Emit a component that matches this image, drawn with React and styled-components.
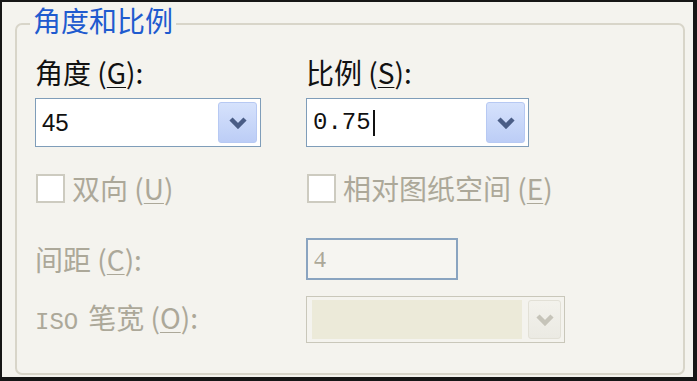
import React from "react";
import styled, { createGlobalStyle } from "styled-components";

const GlobalStyle = createGlobalStyle`
  body {
    margin: 0;
    font-family: "Noto Sans CJK SC", "Noto Sans", sans-serif;
  }
`;

const Frame = styled.div`
  width: 697px;
  height: 381px;
  box-sizing: border-box;
  border-style: solid;
  border-color: #161616;
  border-width: 2px 4px 4px 2px;
  background: #f4f3ee;
  padding: 3px 8px 2px 13px;
  display: flex;
  flex-direction: column;
`;

const Group = styled.fieldset`
  flex: 1;
  margin: 0;
  padding: 0 0 0 18px;
  min-width: 0;
  border: 2px solid #d8d5c9;
  border-radius: 7px;
`;

const Legend = styled.legend`
  margin-left: -5px;
  padding: 0 3px 8px;
  font-size: 28px;
  line-height: 30px;
  color: #1f5bcf;
`;

const Row = styled.div`
  display: grid;
  grid-template-columns: 271px auto;
  align-items: center;
  height: ${(p) => p.$h}px;
  margin-top: ${(p) => p.$top}px;
`;

const Label = styled.span`
  font-size: 28px;
  line-height: 30px;
  white-space: nowrap;
  color: ${(p) => (p.$disabled ? "#aca899" : "#111")};

  u {
    text-decoration-thickness: 1px;
    text-underline-offset: 3px;
  }
`;

const Mono = styled.span`
  font-family: "Liberation Mono", monospace;
  font-size: 24px;
  margin-right: 10px;
`;

const ComboBox = styled.div`
  box-sizing: border-box;
  width: ${(p) => p.$w}px;
  height: 100%;
  border: 1px solid ${(p) => (p.$disabled ? "#c9c7ba" : "#7f9db9")};
  background: ${(p) => (p.$disabled ? "#f4f3ee" : "#fff")};
  display: flex;
  align-items: stretch;
  padding: 3px 3px 3px ${(p) => (p.$disabled ? 5 : 6)}px;
  gap: 6px;
`;

const ComboText = styled.div`
  flex: 1;
  display: flex;
  align-items: center;
  font-family: ${(p) =>
    p.$mono ? '"Liberation Mono", monospace' : '"Liberation Sans", sans-serif'};
  font-size: 24px;
  color: #111;
  background: ${(p) => (p.$disabled ? "#ecead9" : "transparent")};
`;

const Caret = styled.span`
  display: inline-block;
  width: 2px;
  height: 26px;
  background: #111;
  margin-left: 2px;
`;

const DropButton = styled.div`
  width: ${(p) => (p.$disabled ? 33 : 39)}px;
  box-sizing: border-box;
  border-radius: 3px;
  display: flex;
  align-items: center;
  justify-content: center;
  border: 1px solid ${(p) => (p.$disabled ? "#e2e0d6" : "#b7c9f3")};
  background: ${(p) =>
    p.$disabled
      ? "linear-gradient(#f3f2ec, #ebeae3)"
      : "linear-gradient(#d6e2fc, #bccdf6)"};
`;

const CheckRow = styled.label`
  display: flex;
  align-items: center;
  gap: 7px;
`;

const CheckSquare = styled.span`
  box-sizing: border-box;
  width: 29px;
  height: 29px;
  margin-left: 1px;
  background: #fff;
  border: 2px solid #cdcbc0;
`;

const TextInput = styled.div`
  box-sizing: border-box;
  width: 152px;
  height: 100%;
  border: 2px solid #8aa4c0;
  background: #f6f5f1;
  display: flex;
  align-items: center;
  padding-left: 6px;
  font-family: "Liberation Serif", serif;
  font-size: 24px;
  color: #aca899;
`;

const Chevron = ({ color }) => (
  <svg width="20" height="13" viewBox="0 0 20 13">
    <polyline
      points="3,3 10,10 17,3"
      fill="none"
      stroke={color}
      strokeWidth="4.5"
      strokeLinejoin="miter"
    />
  </svg>
);

const Combo = ({ w, value, mono, focused, disabled }) => (
  <ComboBox $w={w} $disabled={disabled}>
    <ComboText $mono={mono} $disabled={disabled}>
      {value}
      {focused && <Caret />}
    </ComboText>
    <DropButton $disabled={disabled}>
      <Chevron color={disabled ? "#c6c4b9" : "#4a5d86"} />
    </DropButton>
  </ComboBox>
);

const Check = ({ children }) => (
  <CheckRow>
    <CheckSquare />
    <Label $disabled>{children}</Label>
  </CheckRow>
);

export default function App() {
  return (
    <>
      <GlobalStyle />
      <Frame>
        <Group>
          <Legend>角度和比例</Legend>
          <Row $h={30} $top={14}>
            <Label>
              角度 (<u>G</u>):
            </Label>
            <Label>
              比例 (<u>S</u>):
            </Label>
          </Row>
          <Row $h={49} $top={11}>
            <Combo w={226} value="45" />
            <Combo w={223} value="0.75" mono focused />
          </Row>
          <Row $h={30} $top={26}>
            <Check>
              双向 (<u>U</u>)
            </Check>
            <Check>
              相对图纸空间 (<u>E</u>)
            </Check>
          </Row>
          <Row $h={42} $top={35}>
            <Label $disabled>
              间距 (<u>C</u>):
            </Label>
            <TextInput>4</TextInput>
          </Row>
          <Row $h={47} $top={16}>
            <Label $disabled>
              <Mono>ISO</Mono>笔宽 (<u>O</u>):
            </Label>
            <Combo w={259} value="" disabled />
          </Row>
        </Group>
      </Frame>
    </>
  );
}
